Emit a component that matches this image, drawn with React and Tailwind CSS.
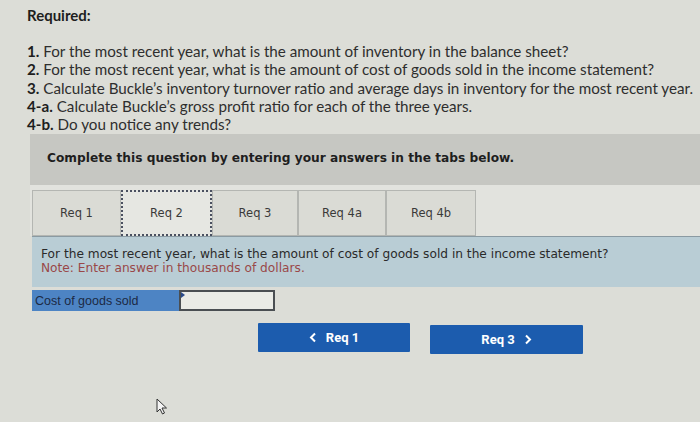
import React from "react";

function Tab({ label, w, active }) {
  return (
    <div
      className={
        "flex h-[46px] items-center justify-center text-[11.5px] text-[#3a3a3a] " +
        (active
          ? "border-2 border-dotted border-[#4a5060] bg-[#e6e7e2]"
          : "border border-[#b4b6b2] bg-[#dadbd5]")
      }
      style={{ width: w }}
    >
      {label}
    </div>
  );
}

export default function App() {
  return (
    <div
      className="relative h-[422px] w-[700px] overflow-hidden bg-[#dcddd7] text-[#2a2a2a]"
      style={{ fontFamily: "Lato, 'Open Sans', sans-serif" }}
    >
      <div className="pl-[27px] pt-[6px]">
        <div className="text-[15px] font-bold leading-[18px] text-[#1e1e1e]">Required:</div>
        <div className="mt-[18px] text-[15.2px] leading-[18.3px] text-[#2e2e2e]">
          <div><b className="text-[#1e1e1e]">1.</b> For the most recent year, what is the amount of inventory in the balance sheet?</div>
          <div><b className="text-[#1e1e1e]">2.</b> For the most recent year, what is the amount of cost of goods sold in the income statement?</div>
          <div><b className="text-[#1e1e1e]">3.</b> Calculate Buckle’s inventory turnover ratio and average days in inventory for the most recent year.</div>
          <div><b className="text-[#1e1e1e]">4-a.</b> Calculate Buckle’s gross profit ratio for each of the three years.</div>
          <div><b className="text-[#1e1e1e]">4-b.</b> Do you notice any trends?</div>
        </div>
      </div>

      <div className="ml-[30px] mt-[1px]" style={{ fontFamily: "'DejaVu Sans', Verdana, sans-serif" }}>
        <div className="flex h-[51px] items-center bg-[#c6c7c2] pl-[17px] pb-[4px] text-[12.2px] font-bold text-[#1e1e1e]">
          Complete this question by entering your answers in the tabs below.
        </div>
        <div className="bg-[#e2e3de] pl-[2px] pt-[5px]">
          <div className="flex">
            <Tab label="Req 1" w={89} />
            <Tab label="Req 2" w={91} active />
            <Tab label="Req 3" w={86} />
            <Tab label="Req 4a" w={88} />
            <Tab label="Req 4b" w={90} />
          </div>
        </div>
        <div className="ml-[2px] border-t border-[#8a9aa2] bg-[#b9cdd5] pl-[9px] pt-[10px] pb-[12px] text-[12.2px] leading-[14px]">
          <div className="text-[#2a2a2a]">For the most recent year, what is the amount of cost of goods sold in the income statement?</div>
          <div className="text-[#9a4848]">Note: Enter answer in thousands of dollars.</div>
        </div>
        <div className="ml-[2px] mt-[3px] flex h-[21px]">
          <div className="flex w-[147px] items-center bg-[#4d84c4] pl-[3px] text-[12.5px] text-[#1c2a44]" style={{ fontFamily: "'Liberation Sans', Arial, sans-serif" }}>
            Cost of goods sold
          </div>
          <div className="relative w-[96px] border-2 border-[#4a4e52] bg-[#eaebe6]">
            <div className="absolute left-0 top-0 h-0 w-0 border-y-[3px] border-l-[4px] border-y-transparent border-l-[#2a4a8a]" />
          </div>
        </div>
      </div>

      <div className="ml-[258px] mt-[12px] flex gap-[20px]" style={{ fontFamily: "Roboto, sans-serif" }}>
        <div className="flex h-[29px] w-[152px] items-center justify-center gap-[9px] rounded-[1px] bg-[#1c5cae] text-[13px] font-bold text-white">
          <svg width="8" height="11" viewBox="0 0 8 11"><path d="M6 1.5 L2 5.5 L6 9.5" stroke="white" strokeWidth="2" fill="none" /></svg>
          <span>Req 1</span>
        </div>
        <div className="mt-[2px] flex h-[29px] w-[153px] items-center justify-center gap-[9px] rounded-[1px] bg-[#1c5cae] text-[13px] font-bold text-white">
          <span>Req 3</span>
          <svg width="8" height="11" viewBox="0 0 8 11"><path d="M2 1.5 L6 5.5 L2 9.5" stroke="white" strokeWidth="2" fill="none" /></svg>
        </div>
      </div>

      <svg className="absolute left-[156px] top-[398px]" width="12" height="17" viewBox="0 0 12 17">
        <path d="M1 1 L1 14 L4 11 L6.5 16 L8.5 15 L6 10 L10.5 10 Z" fill="#f4f4f4" stroke="#333" strokeWidth="1" strokeLinejoin="round" />
      </svg>
    </div>
  );
}
